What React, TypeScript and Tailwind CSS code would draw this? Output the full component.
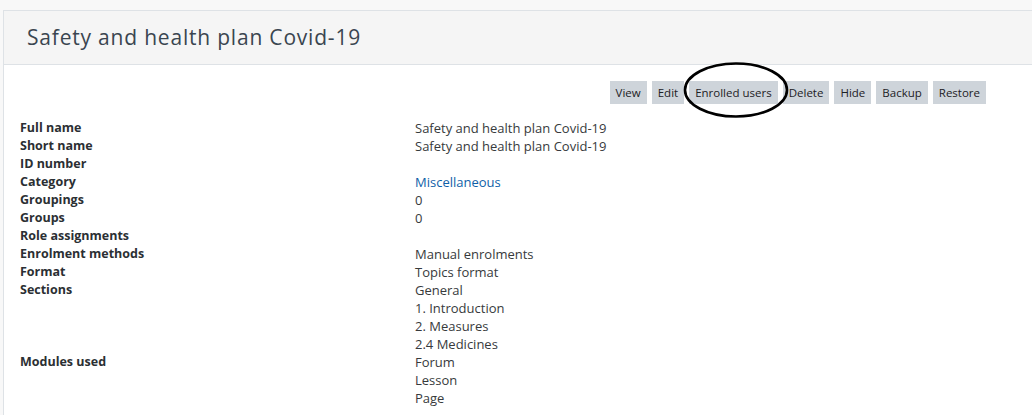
import React from 'react';

const rows: { label: string; values: string[]; link?: boolean }[] = [
    { label: 'Full name', values: ['Safety and health plan Covid-19'] },
    { label: 'Short name', values: ['Safety and health plan Covid-19'] },
    { label: 'ID number', values: [''] },
    { label: 'Category', values: ['Miscellaneous'], link: true },
    { label: 'Groupings', values: ['0'] },
    { label: 'Groups', values: ['0'] },
    { label: 'Role assignments', values: [''] },
    { label: 'Enrolment methods', values: ['Manual enrolments'] },
    { label: 'Format', values: ['Topics format'] },
    { label: 'Sections', values: ['General', '1. Introduction', '2. Measures', '2.4 Medicines'] },
    { label: 'Modules used', values: ['Forum', 'Lesson', 'Page'] },
];

const buttons = ['View', 'Edit', 'Enrolled users', 'Delete', 'Hide', 'Backup', 'Restore'];

export default function App() {
    return (
        <div
            className="w-[1032px] h-[415px] overflow-hidden bg-[#f8f8f8] pt-[10px] text-[#373a3c]"
            style={{ fontFamily: '"Open Sans", "Noto Sans", sans-serif' }}
        >
            <div className="ml-[3px] h-full border-l border-t border-[#dee2e6] bg-white">
                {/* Header */}
                <div className="h-[54px] bg-[#f5f5f5] border-b border-[#dee2e6] flex items-center pl-[23px]">
                    <h1 className="text-[21px] text-[#3a4550] tracking-[0.8px]">Safety and health plan Covid-19</h1>
                </div>

                {/* Actions */}
                <div className="relative flex justify-end gap-[5px] pr-[46px] pt-[16px]">
                    {buttons.map((b) => (
                        <button
                            key={b}
                            className="h-[23px] px-[6px] bg-[#ced4da] text-[11.5px] text-[#1d2125]"
                        >
                            {b}
                        </button>
                    ))}
                    <svg
                        className="absolute left-[677px] top-[-4px]"
                        width="110"
                        height="58"
                        viewBox="0 0 110 58"
                    >
                        <ellipse cx="55" cy="29" rx="51" ry="26.5" fill="none" stroke="#000" strokeWidth="2.6" />
                    </svg>
                </div>

                {/* Details */}
                <div className="pt-[15px] pl-[16px] leading-[18px]">
                    {rows.map((r) => (
                        <div key={r.label} className="flex">
                            <div className="w-[395px] text-[12.5px] font-bold text-[#2b2f33]">{r.label}</div>
                            <div className="flex flex-col text-[13px]">
                                {r.values.map((v, i) => (
                                    <div key={i} className={`h-[18px] ${r.link ? 'text-[#0f5fa8]' : ''}`}>
                                        {v}
                                    </div>
                                ))}
                            </div>
                        </div>
                    ))}
                </div>
            </div>
        </div>
    );
}
